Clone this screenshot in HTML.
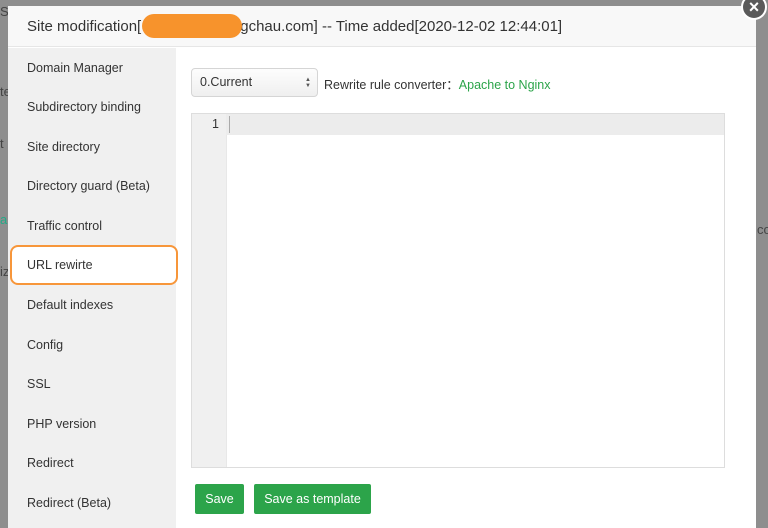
<!DOCTYPE html>
<html><head><meta charset="utf-8"><style>
html,body{margin:0;width:768px;height:528px;overflow:hidden}
body{background:#8e8e8e;font-family:"Liberation Sans",sans-serif;position:relative}
.bgt{position:absolute;color:#444;font-size:13px}
.modal{position:absolute;left:8px;top:6px;width:748px;height:522px;background:#fff;overflow:hidden}
.hdr{position:absolute;left:0;top:0;width:748px;height:41px;background:#f8f8f8;border-bottom:1px solid #e6e6e6;font-size:15px;color:#333;line-height:41px;padding-left:19px;box-sizing:border-box}
.blob{position:absolute;left:134px;top:8px;width:100px;height:24px;background:#f7932c;border-radius:12px}
.side{position:absolute;left:0;top:42px;width:168px;height:480px;background:#f0f0f0}
.side .it{position:absolute;left:19px;font-size:12.5px;color:#333}
.side .sel{position:absolute;left:2px;top:197px;width:168px;height:40px;background:#fff;border:2px solid #f7963a;border-radius:8px;box-sizing:border-box}
.select{position:absolute;left:183px;top:62px;width:127px;height:29px;border:1px solid #d5d5d5;border-radius:4px;background:linear-gradient(#fdfdfd,#efefef);box-sizing:border-box;font-size:12.5px;color:#333;line-height:27px;padding-left:8px}
.arr{position:absolute;right:6px;top:8px;font-size:6px;line-height:6px;color:#555}
.ed{position:absolute;left:183px;top:107px;width:534px;height:355px;border:1px solid #ddd;box-sizing:border-box;background:#fff}
.gut{position:absolute;left:0;top:0;width:34px;height:353px;background:#f0f0f0;border-right:1px solid #e8e8e8}
.act{position:absolute;left:34px;top:0;width:498px;height:21px;background:#ececec}
.btn{position:absolute;top:478px;height:30px;background:#2ca44a;color:#fff;font-size:12.5px;line-height:30px;text-align:center;border-radius:2px}
.close{position:absolute;left:741px;top:-6px;width:26px;height:26px;border-radius:50%;background:#5a5a5a;border:2px solid #fff;box-sizing:border-box;color:#fff;text-align:center;font-size:18px;line-height:22px;font-weight:bold}
</style></head><body>
<div class="bgt" style="left:0;top:4px">S</div>
<div class="bgt" style="left:0;top:84px">te</div>
<div class="bgt" style="left:0;top:136px">t</div>
<div class="bgt" style="left:0;top:212px;color:#2a8">ar</div>
<div class="bgt" style="left:0;top:264px">iz</div>
<div class="bgt" style="left:757px;top:222px">co</div>
<div class="modal">
 <div class="hdr">Site modification[<span style="display:inline-block;width:99px"></span>gchau.com] -- Time added[2020-12-02 12:44:01]<div class="blob"></div></div>
 <div class="side">
  <div class="it" style="top:13px">Domain Manager</div>
  <div class="it" style="top:52px">Subdirectory binding</div>
  <div class="it" style="top:92px">Site directory</div>
  <div class="it" style="top:131px">Directory guard (Beta)</div>
  <div class="it" style="top:171px">Traffic control</div>
  <div class="sel"></div>
  <div class="it" style="top:210px">URL rewirte</div>
  <div class="it" style="top:250px">Default indexes</div>
  <div class="it" style="top:290px">Config</div>
  <div class="it" style="top:329px">SSL</div>
  <div class="it" style="top:369px">PHP version</div>
  <div class="it" style="top:408px">Redirect</div>
  <div class="it" style="top:448px">Redirect (Beta)</div>
 </div>
 <div class="select">0.Current<span class="arr">▲<br>▼</span></div>
 <div style="position:absolute;left:316px;top:68px;font-size:12.5px;color:#333">Rewrite rule converter：<span style="color:#2ca44a">Apache to Nginx</span></div>
 <div class="ed"><div class="gut"></div><div class="act"></div><div style="position:absolute;left:20px;top:3px;font-size:12.5px;color:#333">1</div><div style="position:absolute;left:37px;top:2px;width:1px;height:17px;background:#aaa"></div></div>
 <div class="btn" style="left:187px;width:49px">Save</div>
 <div class="btn" style="left:246px;width:117px">Save as template</div>
</div>
<div class="close">×</div>
</body></html>
